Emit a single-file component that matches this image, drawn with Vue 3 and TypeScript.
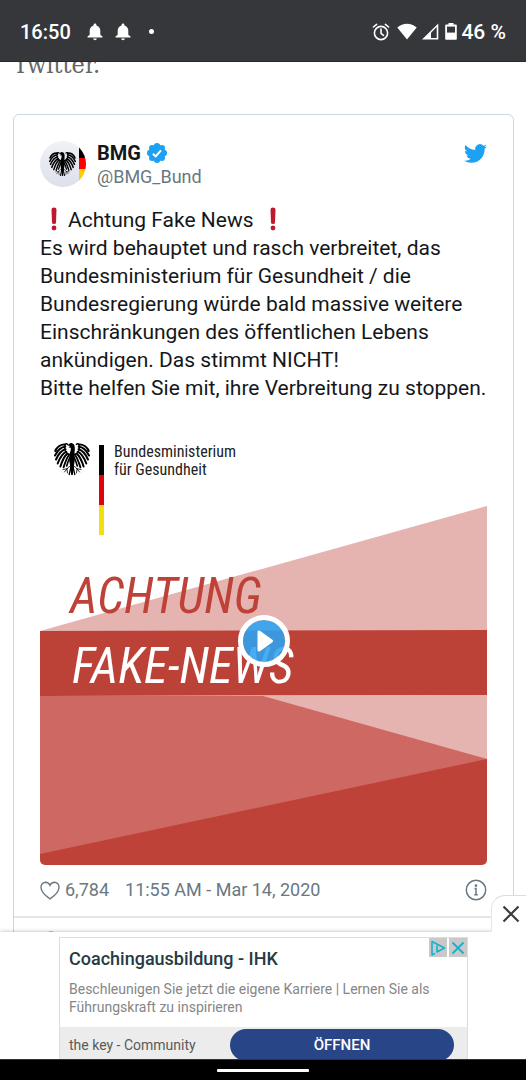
<script setup lang="ts">
interface Feather {
  d: string
  w: number
}

// One half of the federal eagle; the other half is mirrored.
const feathers: Feather[] = [
  { d: 'M15.500 12.500 C12 11.500 9.800 8 11 3 C11.500 1.500 13 1.500 13.600 2.500', w: 1.4 },
  { d: 'M11 2.500 C7 2.200 3 5 1.300 9', w: 2.1 },
  { d: 'M11.300 4.800 C7.500 5 3.500 8.500 1 13.500', w: 2 },
  { d: 'M11.500 7.300 C8.500 8 4.500 12 2 17.500', w: 2 },
  { d: 'M12.300 9.700 C9.500 11 6 15.500 3.700 21.500', w: 2 },
  { d: 'M13.400 11.600 C11 13.500 8.300 18.500 6.400 24.500', w: 2 },
  { d: 'M15 13 C13 15.500 11.300 20 9.600 25.300', w: 1.9 },
  { d: 'M15.800 15.500 C14.500 18 13.500 21 12.700 24', w: 1.6 },
  { d: 'M16.500 23.500 L13 26.800 L9 27.500 M13 26.800 L10.500 30 M13 26.800 L13.500 31', w: 0.8 },
  { d: 'M17.200 24 L15.200 32.500', w: 1.3 }
]

const post = {
  name: 'BMG',
  handle: '@BMG_Bund',
  lead: 'Achtung Fake News',
  lines: [
    'Es wird behauptet und rasch verbreitet, das',
    'Bundesministerium für Gesundheit / die',
    'Bundesregierung würde bald massive weitere',
    'Einschränkungen des öffentlichen Lebens',
    'ankündigen. Das stimmt NICHT!',
    'Bitte helfen Sie mit, ihre Verbreitung zu stoppen.'
  ],
  likes: '6,784',
  date: '11:55 AM - Mar 14, 2020'
}
</script>

<template>
  <div class="screen">
    <svg class="defs" aria-hidden="true">
      <defs>
        <g id="eagle-half">
          <path v-for="f in feathers" :key="f.d" :d="f.d" :stroke-width="f.w" fill="none" stroke="#000" stroke-linecap="round" />
        </g>
        <symbol id="eagle" viewBox="0 0 36 34">
          <use href="#eagle-half" />
          <use href="#eagle-half" transform="matrix(-1 0 0 1 36 0)" />
          <path d="M18 9 C21 12 21.500 17 20.300 21 L18.800 33 L17.200 33 L15.700 21 C14.500 17 15 12 18 9Z" />
          <path d="M20.500 12 C21 7 21.500 2 18 1.200 C16 .8 15 2 13.500 3.600 L16 4 L14.500 5.400 L16.800 5.800 C17.200 8 16 10 15.500 13Z" />
        </symbol>
      </defs>
    </svg>

    <header class="status">
      <div class="status-group">
        <time>16:50</time>
        <svg v-for="n in 2" :key="n" class="bell" viewBox="0 0 16 18" fill="#fff">
          <path d="M8 0.5c.8 0 1.4.6 1.4 1.4v.5c2.500.6 3.900 2.700 3.900 5.200v4.200L15.500 13.600v.900H.5v-.9L2.700 11.800V7.600c0-2.500 1.400-4.600 3.900-5.200v-.5C6.600 1.100 7.200.5 8 .5zM6.200 15.500h3.600a1.800 1.800 0 0 1-3.600 0z" />
        </svg>
        <span class="dot"></span>
      </div>
      <div class="status-group right">
        <svg width="18" height="18" viewBox="0 0 18 18" fill="none" stroke="#fff" stroke-width="1.6" stroke-linecap="round">
          <circle cx="9" cy="10" r="6.600" /><path d="M9 6v4.300l2.500 2M1.400 4 4.600 1.400M16.600 4 13.400 1.400" />
        </svg>
        <svg class="wifi" width="20" height="17" viewBox="0 0 20 17" fill="#fff"><path d="M10 16.500.3 4.600C5.500-.6 14.500-.6 19.700 4.600z" /></svg>
        <svg width="18" height="17" viewBox="0 0 18 17"><path d="M1 16.500 17.300.5v16z" fill="#fff" /><path d="M10 9.700 15.700 4v10.900H10z" fill="#36373b" /></svg>
        <svg class="battery" width="12" height="17" viewBox="0 0 12 17"><path d="M3.500 0h5v1.600H11a.8.8 0 0 1 .8.8V16a.8.8 0 0 1-.8.800H1a.8.8 0 0 1-.8-.8V2.400a.8.8 0 0 1 .8-.8h2.500z" fill="#fff" /><path d="M2 3.600h8v6H2z" fill="#36373b" /></svg>
        <span>46 %</span>
      </div>
    </header>

    <main class="article">
      <p class="intro">Twitter.</p>
      <article class="card">
        <div class="post">
          <div class="author">
            <svg class="avatar" viewBox="0 0 46 46" role="img" aria-label="BMG">
              <defs>
                <clipPath id="round"><circle cx="23" cy="23" r="23" /></clipPath>
                <linearGradient id="soft" x1="0" y1="0" x2="0" y2="1"><stop offset="0" stop-color="#f0f2f7" /><stop offset="1" stop-color="#dde0ec" /></linearGradient>
              </defs>
              <g clip-path="url(#round)">
                <path d="M0 0h46v46H0z" fill="url(#soft)" />
                <use href="#eagle" x="9" y="10" width="27" height="26" />
                <path d="M39 0h7v17h-7z" /><path d="M39 17h7v11h-7z" fill="#f00" /><path d="M39 28h7v18h-7z" fill="#fc0" />
              </g>
            </svg>
            <div class="names">
              <a href="#" class="name">{{ post.name }}
                <svg width="20" height="20" viewBox="0 0 20 20" aria-label="Verified">
                  <g fill="#1da1f2"><circle cx="10" cy="10" r="7.800" /><circle cx="10" cy="3.200" r="3.200" /><circle cx="14.800" cy="5.200" r="3.200" /><circle cx="16.800" cy="10" r="3.200" /><circle cx="14.800" cy="14.800" r="3.200" /><circle cx="10" cy="16.800" r="3.200" /><circle cx="5.200" cy="14.800" r="3.200" /><circle cx="3.200" cy="10" r="3.200" /><circle cx="5.200" cy="5.200" r="3.200" /></g>
                  <path d="m5.800 10.700 2.900 2.600 5.300-6" fill="none" stroke="#fff" stroke-width="2" />
                </svg>
              </a>
              <a href="#" class="handle">{{ post.handle }}</a>
            </div>
            <a href="#" class="bird" aria-label="Twitter">
              <svg width="23" height="23" viewBox="0 0 24 24" fill="#1da1f2"><path d="M23.950 4.570a10 10 0 0 1-2.820.770 4.960 4.960 0 0 0 2.160-2.720c-.950.560-2 .960-3.130 1.180a4.920 4.920 0 0 0-8.380 4.480C7.690 8.090 4.070 6.130 1.640 3.160a4.920 4.920 0 0 0 1.520 6.570 4.900 4.900 0 0 1-2.230-.610v.060a4.920 4.920 0 0 0 3.950 4.830 5 5 0 0 1-2.210.080 4.940 4.940 0 0 0 4.600 3.420A9.870 9.870 0 0 1 0 19.540a13.940 13.940 0 0 0 7.550 2.210c9.050 0 14-7.500 14-13.980 0-.210 0-.420-.020-.630a9.940 9.940 0 0 0 2.420-2.570z" /></svg>
            </a>
          </div>

          <p class="text">
            <svg class="bang" viewBox="0 0 28 24" role="img" aria-label="!"><path d="M11.500 2.500a2.500 2 0 0 1 5 0L16 15.500a2 1.500 0 0 1-4 0z" fill="#be1931" /><circle cx="14" cy="21" r="2.400" fill="#be1931" /></svg>{{ post.lead }}
            <svg class="bang" viewBox="0 0 28 24" role="img" aria-label="!"><path d="M11.500 2.500a2.500 2 0 0 1 5 0L16 15.500a2 1.500 0 0 1-4 0z" fill="#be1931" /><circle cx="14" cy="21" r="2.400" fill="#be1931" /></svg>
            <template v-for="line in post.lines" :key="line"><br />{{ line }}</template>
          </p>

          <div class="video">
            <svg class="poster" viewBox="0 0 447 448">
              <path d="M0 0h447v448H0z" fill="#fff" />
              <path d="M0 214 447 89v125z" fill="#e5b3b0" />
              <path d="M0 279h447v64L0 438z" fill="#ce6862" />
              <path d="M223 279 447 278v64z" fill="#e5b3b0" />
              <path d="M0 437 447 342v106H0z" fill="#bf4238" />
              <path d="M0 214 447 213v65L0 279z" fill="#bc4238" />
              <use href="#eagle" x="14" y="25" width="36" height="34" />
              <path d="M59 28h5v30h-5z" /><path d="M59 58h5v30h-5z" fill="#e3000b" /><path d="M59 88h5v30h-5z" fill="#f3df0b" />
              <g class="ministry"><text x="74" y="40">Bundesministerium</text><text x="74" y="58">für Gesundheit</text></g>
              <g class="headline"><text x="30" y="196" fill="#bf4238">ACHTUNG</text><text x="32" y="266" fill="#fff">FAKE-NEWS</text></g>
            </svg>
            <button type="button" class="play" aria-label="Play">
              <svg width="18" height="22" viewBox="0 0 18 22"><path d="M3 2v18L15.500 11z" fill="#fff" stroke="#fff" stroke-width="3" stroke-linejoin="round" /></svg>
            </button>
          </div>

          <footer class="meta">
            <button type="button" class="like">
              <svg width="20" height="19" viewBox="0 0 20 19" fill="none" stroke="#697882" stroke-width="1.400"><path d="M10 17.800C5 14.500 1 10.500 1 6.200A4.800 4.800 0 0 1 5.600 1.200C7.700 1.200 9.300 2.500 10 4.300 10.700 2.500 12.300 1.200 14.400 1.200A4.800 4.800 0 0 1 19 6.200C19 10.500 15 14.500 10 17.800z" /></svg>
              {{ post.likes }}
            </button>
            <a href="#">{{ post.date }}</a>
            <button type="button" class="info" aria-label="Info">
              <svg width="22" height="22" viewBox="0 0 22 22" fill="none" stroke="#697882" stroke-width="1.500"><circle cx="11" cy="11" r="9.700" /><path d="M9.500 9.500H11v6.500M9.300 15.800h3.400" /><circle cx="11" cy="6.600" r=".6" fill="#697882" /></svg>
            </button>
          </footer>
        </div>
        <div class="more">
          <svg width="22" height="22" viewBox="0 0 22 22" fill="none" stroke="#2b7bb9" stroke-width="1.500"><circle cx="11" cy="11" r="9.700" /></svg>
        </div>
      </article>
    </main>

    <aside class="banner">
      <button type="button" class="close" aria-label="Close">
        <svg width="18" height="18" viewBox="0 0 18 18" stroke="#3c3c3c" stroke-width="2.200"><path d="M1.500 1.500 16.500 16.500M16.500 1.500 1.500 16.500" /></svg>
      </button>
      <div class="ad">
        <div class="choices">
          <a href="#" aria-label="AdChoices"><svg width="16" height="16" viewBox="0 0 16 16" fill="none" stroke="#17b1cc" stroke-width="1.600" stroke-linejoin="round"><path d="M5 13.500 2 15V1.500L14.500 8 7 12V5.500" /></svg></a>
          <button type="button" aria-label="Close ad"><svg width="14" height="14" viewBox="0 0 14 14" stroke="#17b1cc" stroke-width="1.800"><path d="M1.500 1.500 12.500 12.500M12.500 1.500 1.500 12.500" /></svg></button>
        </div>
        <div class="ad-copy">
          <h2>Coachingausbildung - IHK</h2>
          <p>Beschleunigen Sie jetzt die eigene Karriere | Lernen Sie als Führungskraft zu inspirieren</p>
        </div>
        <div class="ad-action">
          <span>the key - Community</span>
          <button type="button">ÖFFNEN</button>
        </div>
      </div>
    </aside>

    <nav class="gesture"><span></span></nav>
  </div>
</template>

<style>
body {
  margin: 0;
  background: #fff;
}
</style>

<style scoped>
* {
  box-sizing: border-box;
}
.screen {
  display: flex;
  flex-direction: column;
  height: 100vh;
  overflow: hidden;
  font-family: Roboto, "Liberation Sans", sans-serif;
  color: #14171a;
}
.defs {
  position: absolute;
  width: 0;
  height: 0;
}
svg {
  display: block;
  flex: none;
}
a {
  color: inherit;
  text-decoration: none;
}
button {
  padding: 0;
  border: 0;
  background: none;
  color: inherit;
  font: inherit;
  cursor: pointer;
}
.status {
  display: flex;
  flex: none;
  justify-content: space-between;
  align-items: center;
  height: 62px;
  padding: 2px 20px 0;
  background: #36373b;
  border-bottom: 1px solid #29292d;
  color: #fff;
  font-size: 20px;
  font-weight: 500;
  position: relative;
  z-index: 1;
}
.status-group {
  display: flex;
  align-items: center;
  gap: 12px;
}
.status-group time {
  margin-right: 4px;
}
.bell {
  width: 16px;
  height: 18px;
}
.dot {
  width: 5px;
  height: 5px;
  margin-left: 6px;
  border-radius: 50%;
  background: #fff;
}
.status-group.right {
  gap: 4px;
  font-size: 21px;
}
.wifi {
  margin-left: 3px;
}
.battery {
  margin-left: 2px;
}
.article {
  flex: 1;
  min-height: 0;
  overflow: hidden;
  padding: 0 12px 0 13px;
}
.intro {
  margin: -12px 0 34px;
  color: #666;
  font-family: "DejaVu Serif Condensed", "DejaVu Serif", serif;
  font-size: 25px;
  line-height: 30px;
}
.card {
  border: 1px solid #ccd6dd;
  border-radius: 6px;
}
.post {
  padding: 26px 26px 14px;
}
.author {
  display: flex;
  align-items: flex-start;
}
.avatar {
  width: 46px;
  height: 46px;
}
.names {
  display: flex;
  flex: 1;
  flex-direction: column;
  padding-left: 11px;
}
.name {
  display: flex;
  align-items: center;
  gap: 6px;
  font-size: 20px;
  font-weight: 700;
  line-height: 24px;
}
.handle {
  color: #697882;
  font-size: 18px;
  line-height: 24px;
}
.bird {
  padding-top: 1px;
}
.text {
  margin: 17px 0 15px;
  font-size: 21px;
  line-height: 28px;
  white-space: nowrap;
}
.bang {
  display: inline-block;
  width: 28px;
  height: 24px;
  vertical-align: -4px;
}
.video {
  position: relative;
  overflow: hidden;
  border-radius: 5px;
}
.poster {
  width: 100%;
}
.ministry {
  font-family: "Liberation Sans Narrow", "Roboto Condensed", "Liberation Sans", sans-serif;
  font-size: 16px;
  fill: #222;
}
.headline {
  font-family: "Liberation Sans Narrow", "Roboto Condensed", "Liberation Sans", sans-serif;
  font-size: 49px;
  font-style: italic;
}
.play {
  position: absolute;
  inset: 0;
  display: flex;
  justify-content: center;
  align-items: center;
  width: 52px;
  height: 52px;
  margin: auto;
  padding-left: 3px;
  border: 5px solid #fff;
  border-radius: 50%;
  background: rgba(43, 163, 242, 0.88);
  background-clip: padding-box;
}
.meta {
  display: flex;
  align-items: center;
  gap: 16px;
  padding-top: 13px;
  color: #697882;
  font-size: 18px;
  line-height: 24px;
}
.like {
  display: flex;
  align-items: center;
  gap: 5px;
}
.info {
  margin-left: auto;
}
.more {
  padding: 13px 26px;
  border-top: 2px solid #e1e8ed;
}
.banner {
  position: relative;
  flex: none;
  height: 127px;
  padding: 5px 58px 0 59px;
  background: #fff;
  box-shadow: 0 0 4px rgba(0, 0, 0, 0.3);
}
.close {
  position: absolute;
  right: 0;
  bottom: 100%;
  display: flex;
  justify-content: center;
  align-items: center;
  width: 35px;
  height: 37px;
  padding-left: 4px;
  background: #fff;
  border-top: 1px solid #ddd;
  border-left: 1px solid #e6e6e6;
  border-radius: 14px 0 0 0;
}
.ad {
  position: relative;
  height: 100%;
  overflow: hidden;
  border: 1px solid #ddd;
  border-bottom: 0;
}
.choices {
  position: absolute;
  top: 0;
  right: 0;
  display: flex;
  gap: 2px;
}
.choices > * {
  display: flex;
  justify-content: center;
  align-items: center;
  width: 18px;
  height: 19px;
  background: #c9c9c9;
}
.ad-copy {
  height: 89px;
  padding: 9px 9px 0;
}
.ad h2 {
  margin: 0 0 9px;
  color: #263a43;
  font-size: 18px;
  font-weight: 500;
  line-height: 24px;
}
.ad p {
  margin: 0;
  color: #868686;
  font-size: 14px;
  line-height: 18px;
}
.ad-action {
  display: flex;
  justify-content: space-between;
  align-items: flex-start;
  padding: 2px 13px 2px 9px;
  background: #ececec;
  color: #5a5a5a;
  font-size: 14px;
  line-height: 32px;
}
.ad-action button {
  width: 224px;
  height: 32px;
  border-radius: 16px;
  background: #284587;
  color: #fff;
  font-size: 15px;
  font-weight: 500;
}
.gesture {
  display: flex;
  flex: none;
  justify-content: center;
  align-items: center;
  height: 21px;
  background: #000;
  border-top: 1px solid #333;
  position: relative;
}
.gesture span {
  width: 92px;
  height: 3px;
  border-radius: 1px;
  background: #fff;
}
</style>
